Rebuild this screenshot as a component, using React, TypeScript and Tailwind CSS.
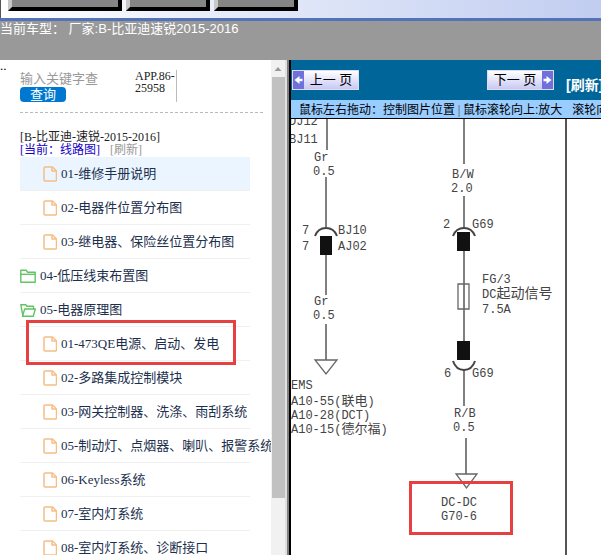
import clsx from "clsx";

type TreeItem = {
    text: string;
    kind: "file" | "folder" | "open";
    active?: boolean;
    marked?: boolean;
};

const tree: TreeItem[] = [
    { text: "01-维修手册说明", kind: "file", active: true },
    { text: "02-电器件位置分布图", kind: "file" },
    { text: "03-继电器、保险丝位置分布图", kind: "file" },
    { text: "04-低压线束布置图", kind: "folder" },
    { text: "05-电器原理图", kind: "open" },
    { text: "01-473QE电源、启动、发电", kind: "file", marked: true },
    { text: "02-多路集成控制模块", kind: "file" },
    { text: "03-网关控制器、洗涤、雨刮系统", kind: "file" },
    { text: "05-制动灯、点烟器、喇叭、报警系统", kind: "file" },
    { text: "06-Keyless系统", kind: "file" },
    { text: "07-室内灯系统", kind: "file" },
    { text: "08-室内灯系统、诊断接口", kind: "file" },
];

const FileIcon = () => (
    <svg className="h-4 w-3.5 shrink-0" viewBox="0 0 14 16" fill="none" stroke="#f6bd85" strokeWidth="1.5" strokeLinejoin="round">
        <path d="M2 1h7.500l4 4v9q0 1-1 1H2q-1 0-1-1V2q0-1 1-1z" />
        <path d="M9 1v4h4" />
    </svg>
);

const FolderIcon = ({ open }: { open: boolean }) => (
    <svg className="h-4 w-4 shrink-0" viewBox="0 0 16 16" fill="none" stroke="#62c462" strokeWidth="1.4" strokeLinejoin="round">
        {open ? (
            <>
                <path d="M3 14.3L.8 2.700h5L7 4.300h6.500V7" />
                <path d="M2.500 14.300L4.700 7h10.600l-2 7.300z" />
            </>
        ) : (
            <>
                <path d="M.8 14.300V2.200h5.400l1.200 2h7.800v10.100z" />
                <path d="M.8 6.300h14.400" />
            </>
        )}
    </svg>
);

const Toolbar = () => (
    <header className="shrink-0">
        <div className="flex h-[18px] items-start gap-1 border-l border-[#555] bg-linear-to-r from-white to-[#c1cdf0] pl-[7px]">
            <button aria-label="首页" className="h-[11px] w-[114px] border-x-4 border-b-4 border-[#000] border-l-[#c8c8c8] bg-[#858585]" />
            <button aria-label="资料" className="h-[11px] w-[84px] border-x-4 border-b-4 border-[#000] border-l-[#c8c8c8] bg-[#858585]" />
            <button aria-label="退出" className="h-[11px] w-[84px] border-x-4 border-b-4 border-[#000] border-l-[#c8c8c8] bg-[#858585]" />
        </div>
        <div className="h-[3px] bg-[#5273b8]" />
        <div className="h-[39px] bg-[#999] text-[13px] leading-[15px] whitespace-nowrap text-white">
            当前车型： 厂家:B-比亚迪速锐2015-2016
        </div>
    </header>
);

const TreeRow = ({ item }: { item: TreeItem }) => (
    <li
        className={clsx(
            "relative h-[34px] w-[230px] border-b border-[#f0f0f0]",
            item.active && "bg-[#eaf5ff]",
        )}
    >
        <a href="#" className={clsx("flex h-full items-center gap-1 whitespace-nowrap", item.kind === "file" && "pl-[23px]")}>
            {item.kind === "file" ? <FileIcon /> : <FolderIcon open={item.kind === "open"} />}
            {item.text}
        </a>
        {item.marked && <span className="pointer-events-none absolute -top-[7px] left-1.5 h-[45px] w-[210px] border-3 border-[#e64040]" />}
    </li>
);

const Sidebar = () => (
    <aside className="flex w-[285px] shrink-0 overflow-hidden font-['Liberation_Serif','Noto_Sans_CJK_SC',serif] text-[13px] text-[#1c2f4d]">
        <div className="w-5 shrink-0 leading-3 text-black">..</div>

        <div className="w-[251px] shrink-0 overflow-hidden">
            <form className="flex h-[53px] w-[243px] border-b border-dashed border-[#bbb] pt-2.5">
                <div className="flex w-[115px] flex-col items-start">
                    <input
                        type="text"
                        aria-label="关键字"
                        placeholder="输入关键字查"
                        className="h-[17px] w-[100px] text-[13px] leading-4 placeholder:text-[#999]"
                    />
                    <button type="button" className="h-[15px] w-[46px] rounded bg-[#0078d0] text-[13px] leading-[14px] text-white">
                        查询
                    </button>
                </div>
                <div className="h-8 w-[42px] border-r border-[#bbb] text-xs leading-3 text-[#222]">
                    APP.86-
                    <br />
                    25958
                </div>
            </form>

            <div className="pt-[18px] text-xs leading-[13px] whitespace-nowrap">
                <div className="text-[#222]">[B-比亚迪-速锐-2015-2016]</div>
                <div className="flex h-[13px] gap-2.5">
                    <a href="#" className="text-[#1400c8]">[当前：线路图]</a>
                    <a href="#" className="text-[#999]">[刷新]</a>
                </div>
            </div>

            <ul>
                {tree.map((item, i) => (
                    <TreeRow key={i} item={item} />
                ))}
            </ul>
        </div>

        {/* scrollbar */}
        <div className="flex flex-1 flex-col items-center bg-[#f1f1f1]">
            <svg className="h-[17px] w-3 shrink-0" viewBox="0 0 12 17">
                <path d="M2.500 11L6 7l3.500 4z" fill="#999" />
            </svg>
            <div className="h-[85%] w-[13px] bg-[#c1c1c1]" />
        </div>
    </aside>
);

const ArrowIcon = ({ right }: { right?: boolean }) => (
    <svg className="h-full w-[11px] shrink-0 bg-[#7070dc]" viewBox="0 0 11 18">
        {right ? (
            <path d="M1.500 7.800h3V5L9.500 9l-5 4v-2.800h-3z" fill="#fff" />
        ) : (
            <path d="M9.500 7.800h-3V5L1.500 9l5 4v-2.800h3z" fill="#fff" />
        )}
    </svg>
);

const Diagram = () => (
    <svg
        className="block h-[436px] w-[310px] font-['Liberation_Mono','Noto_Sans_CJK_SC',monospace] text-xs"
        viewBox="291 119 310 436"
        fill="none"
        stroke="#808080"
        strokeWidth="2"
    >
        {/* left wire */}
        <path d="M327 119v31M326 177v50M326 255v40M326 324v36" />
        <path d="M315 236q3-8 11-8t11 8" stroke="#444" />
        <path d="M315 360h22l-11 14z" stroke="#666" strokeWidth="1.3" />

        {/* middle wire */}
        <path d="M464 119v45M464 196v32M464 251v90M464 370v36M466 438v36" />
        <path d="M453 236q3-8 11-8t11 8M453 361q3 9 11 9t11-9" stroke="#444" />
        <path d="M458 284h11v25h-11z" stroke="#666" strokeWidth="1.3" />
        <path d="M456 474h21l-10.500 14z" stroke="#666" strokeWidth="1.3" />

        {/* right wire */}
        <path d="M566 119v436" stroke="#555" />

        <g fill="#111" stroke="none">
            <rect x="320" y="236" width="12" height="19" />
            <rect x="457" y="232" width="13" height="19" />
            <rect x="457" y="341" width="13" height="19" />
        </g>

        <g fill="#444" stroke="none">
            <text x="289" y="125">DJ12</text>
            <text x="289" y="143">BJ11</text>
            <text x="314" y="161">Gr</text>
            <text x="313" y="175">0.5</text>
            <text x="302" y="234">7</text>
            <text x="302" y="250">7</text>
            <text x="338" y="234">BJ10</text>
            <text x="338" y="250">AJ02</text>
            <text x="314" y="305">Gr</text>
            <text x="313" y="319">0.5</text>
            <text x="291" y="389">EMS</text>
            <text x="291" y="405">A10-55(<tspan fontSize="13">联电</tspan>)</text>
            <text x="291" y="419">A10-28(DCT)</text>
            <text x="291" y="433">A10-15(<tspan fontSize="13">德尔福</tspan>)</text>

            <text x="452" y="178">B/W</text>
            <text x="451" y="192">2.0</text>
            <text x="443" y="228">2</text>
            <text x="472" y="228">G69</text>
            <text x="482" y="283">FG/3</text>
            <text x="482" y="298">DC<tspan fontSize="14">起动信号</tspan></text>
            <text x="482" y="313">7.5A</text>
            <text x="444" y="377">6</text>
            <text x="472" y="377">G69</text>
            <text x="454" y="417">R/B</text>
            <text x="453" y="431">0.5</text>
            <text x="441" y="506">DC-DC</text>
            <text x="441" y="520">G70-6</text>
        </g>

        <rect x="410.500" y="482.500" width="101" height="51" stroke="#e64040" strokeWidth="3" />
    </svg>
);

const Viewer = () => (
    <main className="flex min-w-0 flex-1 flex-col overflow-hidden whitespace-nowrap">
        <div className="flex h-10 shrink-0 items-center bg-[#006699] pl-px">
            <button type="button" className="flex h-5 w-[67px] shrink-0 items-center border border-[#dde] bg-linear-to-b from-white to-[#c9c9f5] text-[13px] text-black">
                <ArrowIcon />
                <span className="flex-1">上一 页</span>
            </button>
            <button type="button" className="ml-32 flex h-5 w-[67px] shrink-0 items-center border border-[#dde] bg-linear-to-b from-white to-[#c9c9f5] text-[13px] text-black">
                <span className="flex-1">下一 页</span>
                <ArrowIcon right />
            </button>
            <a href="#" className="ml-3 pt-2.5 text-sm font-bold text-white">[刷新]</a>
        </div>
        <div className="flex h-[19px] shrink-0 border-b border-black bg-[#99ccff] pl-2 text-xs leading-[20px] text-black *:shrink-0">
            <span>鼠标左右拖动：控制图片位置</span>
            <span className="w-2 text-center text-[#777]">|</span>
            <span>鼠标滚轮向上:放大</span>
            <span className="ml-2.5">滚轮向</span>
        </div>
        <div className="min-h-0 flex-1 overflow-hidden bg-white">
            <Diagram />
        </div>
    </main>
);

export default function App() {
    return (
        <div className="flex h-screen flex-col overflow-hidden bg-white font-['Liberation_Sans','Noto_Sans_CJK_SC',sans-serif]">
            <Toolbar />
            <div className="flex min-h-0 flex-1">
                <Sidebar />
                <div className="w-1.5 shrink-0 border-x-2 border-l-[#e0e0e0] border-r-black bg-[#808080]" />
                <Viewer />
            </div>
        </div>
    );
}
